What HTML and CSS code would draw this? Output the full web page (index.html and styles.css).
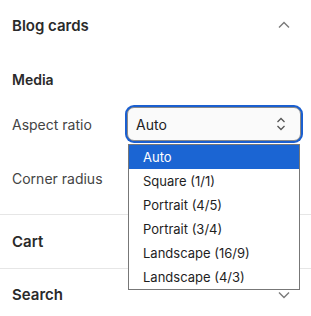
FILE: index.html
```html
<!DOCTYPE html>
<html lang="en">
<head>
    <meta charset="UTF-8">
    <meta name="viewport" content="width=device-width, initial-scale=1.0">
    <title>Theme settings</title>
    <link rel="stylesheet" href="styles.css">
</head>
<body>

    <div class="panel">

        <!-- Blog cards (open) -->
        <section class="group">
            <div class="group-head first">
                <span>Blog cards</span>
                <svg class="chev" width="12" height="8" viewBox="0 0 12 8"><path d="M1 6.5 L6 1.5 L11 6.5" fill="none" stroke="#7a7a7a" stroke-width="1.4"/></svg>
            </div>
            <div class="group-body">
                <h3>Media</h3>

                <div class="field">
                    <label>Aspect ratio</label>
                    <div class="select-wrap">
                        <div class="select">
                            <span>Auto</span>
                            <svg width="10" height="14" viewBox="0 0 10 14"><path d="M1.5 5 L5 1.5 L8.5 5 M1.5 9 L5 12.5 L8.5 9" fill="none" stroke="#555" stroke-width="1.3"/></svg>
                        </div>
                        <ul class="options">
                            <li class="active">Auto</li>
                            <li>Square (1/1)</li>
                            <li>Portrait (4/5)</li>
                            <li>Portrait (3/4)</li>
                            <li>Landscape (16/9)</li>
                            <li>Landscape (4/3)</li>
                        </ul>
                    </div>
                </div>

                <div class="field">
                    <label>Corner radius</label>
                </div>
            </div>
        </section>

        <section class="group">
            <div class="group-head">
                <span>Cart</span>
            </div>
        </section>

        <section class="group">
            <div class="group-head last">
                <span>Search</span>
                <svg class="chev" width="12" height="8" viewBox="0 0 12 8"><path d="M1 1.5 L6 6.5 L11 1.5" fill="none" stroke="#7a7a7a" stroke-width="1.4"/></svg>
            </div>
        </section>

    </div>

</body>
</html>
```

FILE: styles.css
```css
body {
    margin: 0;
    padding: 0;
    background: #fff;
    font-family: Inter, "Noto Sans", sans-serif;
    color: #222;
}

.panel {
    width: 311px;
    height: 316px;
    overflow: hidden;
}

.group {
    border-bottom: 1px solid #e6e6e6;
}

.group-head {
    height: 53px;
    padding: 0 21px 0 12px;
    display: flex;
    align-items: center;
    justify-content: space-between;
    font-size: 15px;
    font-weight: 600;
    color: #2a2a2a;
}

.group-head.first {
    height: 50px;
}

.group-head.last {
    height: 51px;
}

.group-body {
    padding: 0 0 19px 12px;
}

h3 {
    margin: 20px 0 17px;
    font-size: 14px;
    line-height: 20px;
    font-weight: 600;
    color: #2a2a2a;
}

.field {
    height: 34px;
    display: flex;
    align-items: center;
    margin-bottom: 20px;
}

.field:last-child {
    margin-bottom: 0;
}

.field label {
    width: 115px;
    font-size: 14px;
    color: #444;
}

.select-wrap {
    position: relative;
}

.select {
    width: 174px;
    height: 34px;
    box-sizing: border-box;
    border: 1px solid #8a8a8a;
    border-radius: 7px;
    box-shadow: 0 0 0 2px #1a5fd0;
    background: #fafafa;
    display: flex;
    align-items: center;
    justify-content: space-between;
    padding: 0 14px 0 8px;
    font-size: 14px;
    color: #222;
}

.options {
    position: absolute;
    top: 37px;
    left: 1px;
    width: 172px;
    box-sizing: border-box;
    margin: 0;
    padding: 0;
    list-style: none;
    background: #fff;
    border: 1px solid #777;
    z-index: 2;
}

.options li {
    height: 24px;
    line-height: 24px;
    padding-left: 14px;
    font-size: 13px;
    color: #1e1e1e;
}

.options li.active {
    background: #1b65d3;
    color: #fff;
}
```
